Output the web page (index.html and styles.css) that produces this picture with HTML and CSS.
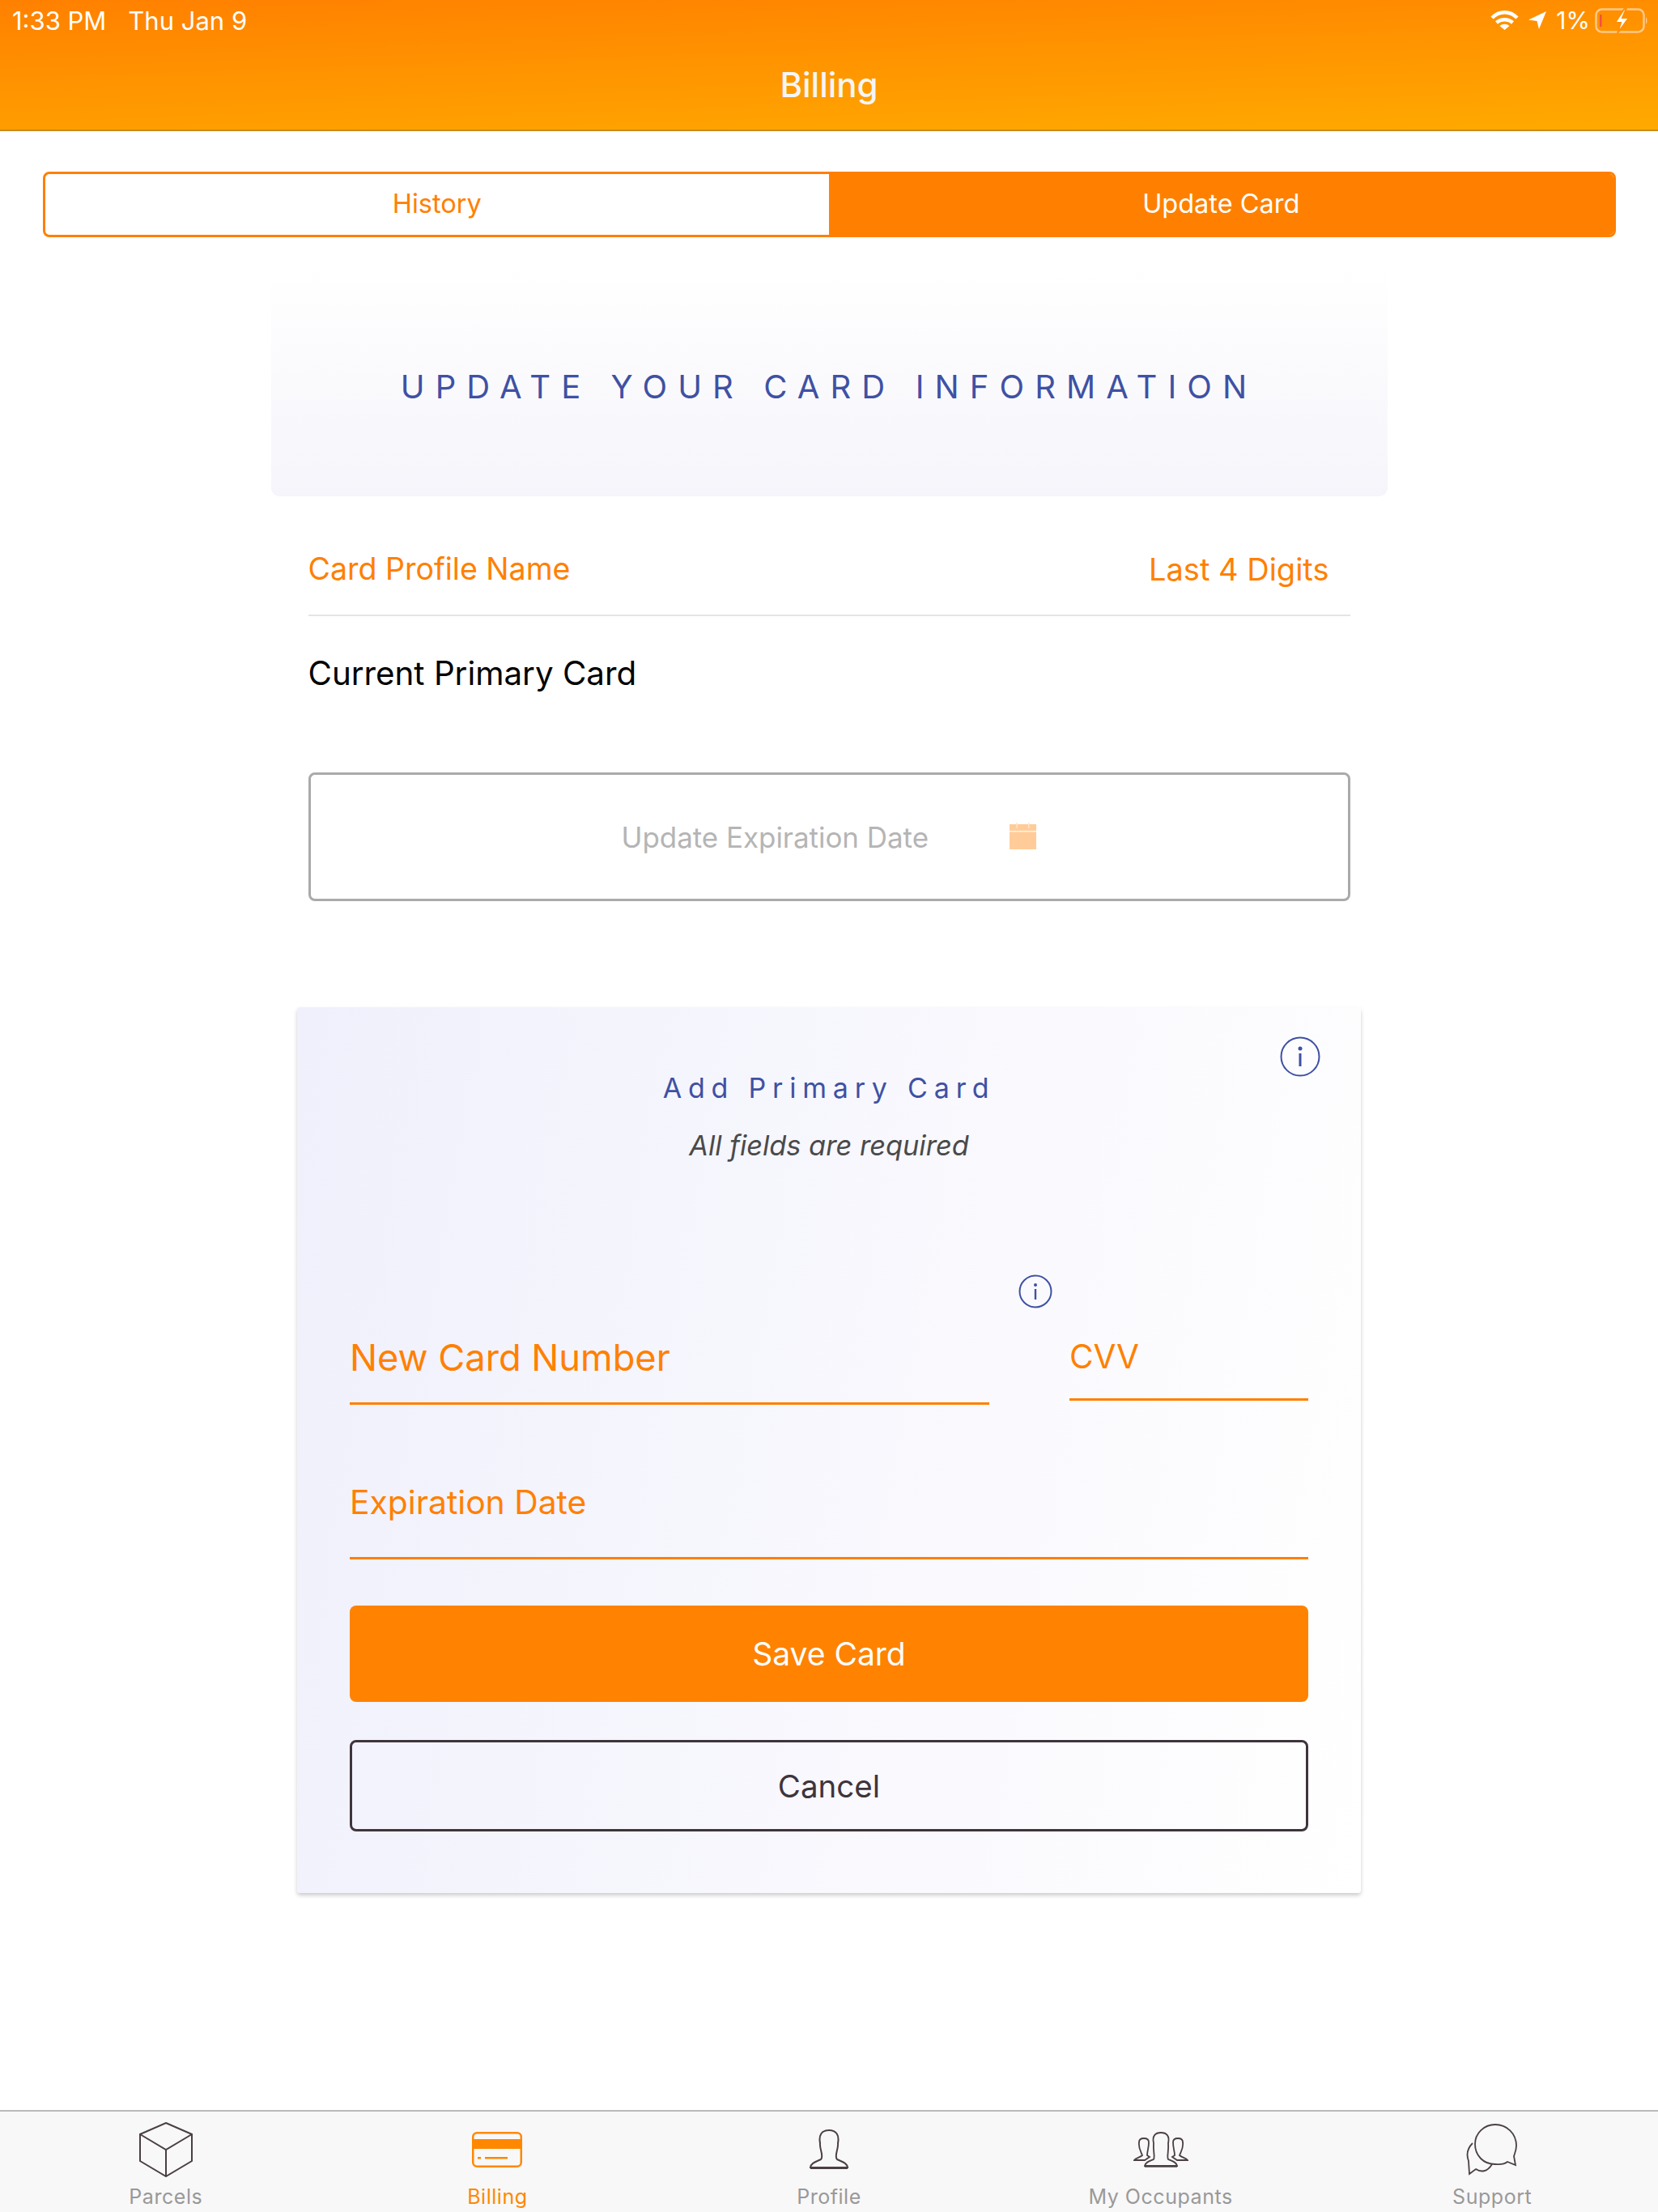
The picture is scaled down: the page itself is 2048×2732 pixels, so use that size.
FILE: index.html
```html
<!DOCTYPE html>
<html lang="en">
<head>
  <meta charset="UTF-8">
  <title>Billing</title>
  <link rel="stylesheet" href="styles.css">
</head>
<body>
  <header class="app-header">
    <div class="status-bar">
      <div class="status-left">
        <span>1:33 PM</span>
        <span>Thu Jan 9</span>
      </div>
      <div class="status-right">
        <svg class="wifi-icon" viewBox="0 0 35 24">
          <path d="M2 9 C11 0 24 0 33 9" fill="none" stroke="#fff" stroke-width="4.500"/>
          <path d="M7.500 15 C13 10 22 10 27.500 15" fill="none" stroke="#fff" stroke-width="4.500"/>
          <path d="M11.500 19 C15 16 20 16 23.500 19 L17.500 24 Z" fill="#fff"/>
        </svg>
        <svg class="arrow-icon" viewBox="0 0 22 22">
          <path d="M22 0 L0 10.500 L10.500 12 L13 22 Z" fill="#fff"/>
        </svg>
        <span class="battery-pct">1%</span>
        <svg class="battery-icon" viewBox="0 0 66 31">
          <rect x="1.500" y="1.500" width="59" height="28" rx="7" fill="none" stroke="#ffc98a" stroke-width="2.500"/>
          <rect x="6" y="8" width="2.500" height="15" fill="#f4503c"/>
          <path d="M37 0 L25 18 L32 18 L28 31 L42 12 L34 12 L39 0 Z" fill="#fff" stroke="#ff9000" stroke-width="2"/>
          <path d="M63 11 C65 13 65 18 63 20 Z" fill="#ffc98a"/>
        </svg>
      </div>
    </div>
    <h1 class="app-title">Billing</h1>
  </header>

  <main class="page">
    <div class="segment">
      <div class="segment-item">History</div>
      <div class="segment-item segment-active">Update Card</div>
    </div>

    <section class="banner">
      <h2 class="banner-title">UPDATE YOUR CARD INFORMATION</h2>
    </section>

    <section class="current-card">
      <div class="card-head">
        <span>Card Profile Name</span>
        <span class="card-digits">Last 4 Digits</span>
      </div>
      <div class="card-name">Current Primary Card</div>
      <div class="expiry-box">
        <span class="expiry-text">Update Expiration Date</span>
        <svg class="calendar-icon" viewBox="0 0 33 33">
          <rect x="0" y="2" width="33" height="31" fill="#ffcc99"/>
          <rect x="0" y="10" width="33" height="1.500" fill="#fff3e6"/>
          <rect x="8.500" y="0" width="1.500" height="7" fill="#ffe6cc"/>
          <rect x="23" y="0" width="1.500" height="7" fill="#ffe6cc"/>
        </svg>
      </div>
    </section>

    <section class="add-card">
      <svg class="info-icon info-large" viewBox="0 0 50 50">
        <circle cx="25" cy="25" r="23.500" fill="none" stroke="#3f51a3" stroke-width="2"/>
        <circle cx="25" cy="15" r="2.500" fill="#3f51a3"/>
        <rect x="23.500" y="21" width="3" height="16" fill="#3f51a3"/>
      </svg>
      <h3 class="add-title">Add Primary Card</h3>
      <p class="add-note">All fields are required</p>

      <div class="number-row">
        <div class="field-number">
          <svg class="info-icon info-small" viewBox="0 0 42 42">
            <circle cx="21" cy="21" r="19.500" fill="none" stroke="#3f51a3" stroke-width="2"/>
            <circle cx="21" cy="13" r="2" fill="#3f51a3"/>
            <rect x="19.800" y="18" width="2.400" height="13" fill="#3f51a3"/>
          </svg>
          <span class="number-label">New Card Number</span>
        </div>
        <div class="field-cvv">CVV</div>
      </div>
      <div class="field-expiry">Expiration Date</div>

      <button class="btn btn-save" type="button">Save Card</button>
      <button class="btn btn-cancel" type="button">Cancel</button>
    </section>
  </main>

  <nav class="tab-bar">
    <div class="tab">
      <div class="tab-icon">
        <svg width="68" height="68" viewBox="0 0 68 68" fill="none" stroke="#4a3f44" stroke-width="2">
          <path d="M34 1 L66 15 V48 L34 67 L2 48 V15 Z"/>
          <path d="M2 15 L34 34 L66 15 M34 34 V67"/>
        </svg>
      </div>
      <span>Parcels</span>
    </div>
    <div class="tab tab-active">
      <div class="tab-icon">
        <svg width="62" height="44" viewBox="0 0 62 44">
          <rect x="1.250" y="1.250" width="59.500" height="41.500" rx="5" fill="none" stroke="#ff8800" stroke-width="2.500"/>
          <rect x="1" y="9" width="60" height="12" fill="#ff8800"/>
          <rect x="7" y="31" width="4" height="2.500" fill="#ff8800"/>
          <rect x="16" y="31" width="28" height="2.500" fill="#ff8800"/>
        </svg>
      </div>
      <span>Billing</span>
    </div>
    <div class="tab">
      <div class="tab-icon">
        <svg width="50" height="50" viewBox="0 0 50 50" fill="none" stroke="#4a3f44" stroke-width="2">
          <path d="M2 47 C3 41 9 40 15 37 C19 33 13 24 14 17 C12 7 16 1 25 1 C34 1 38 7 36 17 C37 24 31 33 35 37 C41 40 47 41 48 47 Z"/>
          <path d="M2 47.500 H48" stroke-width="3"/>
        </svg>
      </div>
      <span>Profile</span>
    </div>
    <div class="tab">
      <div class="tab-icon">
        <svg width="68" height="44" viewBox="0 0 68 44" fill="none" stroke="#4a3f44" stroke-width="1.800">
          <path d="M14 42 C15 37 20 36 25 34 C27 30 24 24 25 14 C23 5 27 1 34 1 C41 1 45 5 43 14 C44 24 41 30 43 34 C48 36 53 37 54 42 Z"/>
          <path d="M1 35 C3 32 8 32 11 29 C9 24 6 20 7 13 C7 9 10 8 13 8 C16 8 19 9 19 13 C19 20 17 24 17 29 L20 31 L14 35 Z"/>
          <path d="M67 35 C65 32 60 32 57 29 C59 24 62 20 61 13 C61 9 58 8 55 8 C52 8 49 9 49 13 C49 20 51 24 51 29 L48 31 L54 35 Z"/>
          <path d="M14 42.500 H54" stroke-width="2.500"/>
        </svg>
      </div>
      <span>My Occupants</span>
    </div>
    <div class="tab">
      <div class="tab-icon">
        <svg width="64" height="64" viewBox="0 0 64 64" fill="none" stroke="#4a3f44" stroke-width="1.800">
          <path d="M36 1 C50 1 62 12 62 27 C62 33 60 37 59 40 L61 51 L51 47 C46 51 42 50 36 50 C21 50 11 39 11 25 C11 12 22 1 36 1 Z"/>
          <path d="M8 24 C2 30 0 38 3 46 L4 62 L12 56 C18 60 26 60 32 50"/>
        </svg>
      </div>
      <span>Support</span>
    </div>
  </nav>
</body>
</html>
```

FILE: styles.css
```css
* {
  box-sizing: border-box;
}
html, body {
  margin: 0;
  padding: 0;
}
body {
  display: flex;
  flex-direction: column;
  height: 2732px;
  background: white;
  font-family: Inter, "Noto Sans", sans-serif;
  overflow: hidden;
}

/* header */
.app-header {
  height: 162px;
  background: linear-gradient(178deg, #ff8000, #ffaa00);
  border-bottom: 2px solid #c98a1e;
  color: white;
}
.status-bar {
  display: flex;
  justify-content: space-between;
  align-items: center;
  height: 50px;
  padding: 0 12px 0 15px;
  font-size: 31px;
}
.status-left {
  display: flex;
  gap: 27px;
}
.status-right {
  display: flex;
  align-items: center;
  font-size: 30px;
}
.wifi-icon {
  width: 35px;
  height: 24px;
}
.arrow-icon {
  width: 22px;
  height: 22px;
  margin-left: 12px;
}
.battery-pct {
  margin-left: 12px;
}
.battery-icon {
  width: 66px;
  height: 31px;
  margin-left: 6px;
}
.app-title {
  margin: 0;
  text-align: center;
  font-size: 42px;
  font-weight: 500;
  line-height: 60px;
  margin-top: 25px;
  color: #f5f5f5;
}

/* tabs at the top */
.page {
  flex: 1;
  display: flex;
  flex-direction: column;
  align-items: center;
}
.segment {
  display: flex;
  width: 1943px;
  height: 81px;
  margin-top: 50px;
  border: 3px solid #ff8000;
  border-radius: 8px;
  overflow: hidden;
}
.segment-item {
  flex: 1;
  display: flex;
  align-items: center;
  justify-content: center;
  padding-bottom: 2px;
  font-size: 32.500px;
  color: #ff8000;
}
.segment-active {
  background: #ff8000;
  color: white;
}

/* banner */
.banner {
  display: flex;
  align-items: center;
  justify-content: center;
  width: 1379px;
  height: 283px;
  margin-top: 37px;
  padding-top: 9px;
  background: linear-gradient(180deg, white, #f5f5fb);
  border-radius: 0 0 10px 10px;
}
.banner-title {
  margin: 0;
  padding-top: 2px;
  font-size: 40px;
  font-weight: 400;
  letter-spacing: 13.100px;
  color: #3f51a3;
}

/* current card */
.current-card {
  width: 1287px;
}
.card-head {
  display: flex;
  justify-content: space-between;
  height: 148px;
  padding: 67px 26px 0 0;
  border-bottom: 2px solid #e4e4e4;
  line-height: 46px;
  font-size: 37.500px;
  color: #ff8000;
}
.card-digits {
  font-size: 38px;
}
.card-name {
  margin-top: 46px;
  line-height: 50px;
  font-size: 40.300px;
  color: black;
}
.expiry-box {
  display: flex;
  align-items: center;
  height: 159px;
  margin-top: 97px;
  padding-left: 384px;
  border: 3px solid #aaa;
  border-radius: 8px;
}
.expiry-text {
  font-size: 34.900px;
  color: #b5b5b5;
}
.calendar-icon {
  width: 33px;
  height: 33px;
  margin-left: 100px;
  margin-bottom: 3px;
}

/* add card form */
.add-card {
  position: relative;
  width: 1314px;
  height: 1094px;
  margin-top: 131px;
  padding: 0 65px;
  background: linear-gradient(100deg, #f0f0fc, white);
  border-radius: 4px;
  box-shadow: 0 3px 5px rgba(0, 0, 0, 0.2);
}
.info-icon {
  display: block;
}
.info-large {
  position: absolute;
  top: 36px;
  right: 50px;
  width: 50px;
  height: 50px;
}
.add-title {
  margin: 0;
  padding-top: 78px;
  text-align: center;
  line-height: 44px;
  font-size: 34px;
  font-weight: 400;
  letter-spacing: 7.800px;
  color: #3f51a3;
}
.add-note {
  margin: 27px 0 0;
  text-align: center;
  line-height: 44px;
  font-size: 34.300px;
  font-style: italic;
  color: #4a4a4a;
}
.number-row {
  display: flex;
  justify-content: space-between;
  align-items: flex-start;
}
.field-number {
  position: relative;
  width: 790px;
  height: 298px;
  display: flex;
  align-items: flex-end;
  padding-bottom: 28px;
  border-bottom: 3px solid #ff8000;
  font-size: 45.200px;
  color: #ff8000;
}
.info-small {
  position: absolute;
  top: 137px;
  right: -78px;
  width: 42px;
  height: 42px;
}
.field-cvv {
  width: 295px;
  height: 293px;
  display: flex;
  align-items: flex-end;
  padding-bottom: 27px;
  border-bottom: 3px solid #ff8000;
  font-size: 40.500px;
  color: #ff8000;
}
.field-expiry {
  height: 191px;
  display: flex;
  align-items: flex-end;
  padding-bottom: 43px;
  border-bottom: 3px solid #ff8000;
  font-size: 40.800px;
  color: #ff8000;
}
.btn {
  display: block;
  width: 100%;
  font-family: inherit;
  border-radius: 8px;
}
.btn-save {
  height: 119px;
  margin-top: 57px;
  border: none;
  background: #ff8200;
  font-size: 39px;
  color: white;
}
.btn-cancel {
  height: 113px;
  margin-top: 47px;
  border: 3px solid #3f343c;
  background: transparent;
  font-size: 38.500px;
  color: #3f343c;
}

/* bottom tab bar */
.tab-bar {
  display: flex;
  height: 126px;
  background: #f8f8f8;
  border-top: 2px solid #bbb;
}
.tab {
  flex: 1;
  display: flex;
  flex-direction: column;
  align-items: center;
  font-size: 25px;
  letter-spacing: 0.540px;
  line-height: 30px;
  color: #999;
}
.tab-active {
  color: #ff8800;
}
.tab-icon {
  display: flex;
  align-items: center;
  justify-content: center;
  height: 70px;
  margin-top: 12px;
  margin-bottom: 8px;
}
```
